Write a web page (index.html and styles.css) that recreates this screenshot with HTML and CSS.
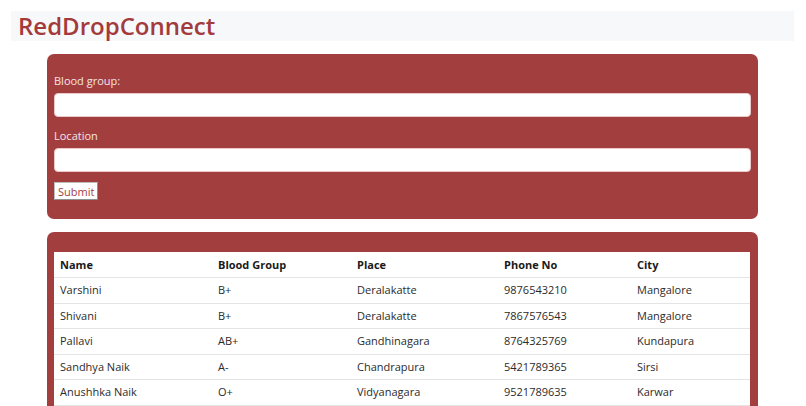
FILE: index.html
```html
<!DOCTYPE html>
<html>
<head>
<meta charset="utf-8">
<link rel="stylesheet" href="styles.css">
</head>
<body>
<header class="brand-bar">
  <h1 class="brand">RedDropConnect</h1>
</header>
<main class="content">
  <form class="card search-card">
    <label class="field-label" for="bg">Blood group:</label>
    <input class="field-input" id="bg" type="text">
    <label class="field-label" for="loc">Location</label>
    <input class="field-input" id="loc" type="text">
    <button class="submit-btn" type="button">Submit</button>
  </form>
  <section class="card table-card">
    <table class="donors">
      <thead>
        <tr><th class="c1">Name</th><th class="c2">Blood Group</th><th class="c3">Place</th><th class="c4">Phone No</th><th class="c5">City</th></tr>
      </thead>
      <tbody>
        <tr><td>Varshini</td><td>B+</td><td>Deralakatte</td><td>9876543210</td><td>Mangalore</td></tr>
        <tr><td>Shivani</td><td>B+</td><td>Deralakatte</td><td>7867576543</td><td>Mangalore</td></tr>
        <tr><td>Pallavi</td><td>AB+</td><td>Gandhinagara</td><td>8764325769</td><td>Kundapura</td></tr>
        <tr><td>Sandhya Naik</td><td>A-</td><td>Chandrapura</td><td>5421789365</td><td>Sirsi</td></tr>
        <tr><td>Anushhka Naik</td><td>O+</td><td>Vidyanagara</td><td>9521789635</td><td>Karwar</td></tr>
      </tbody>
    </table>
  </section>
</main>
</body>
</html>
```
FILE: styles.css
```css
* { box-sizing: border-box; }
body {
  margin: 0;
  font-family: "Open Sans", "Noto Sans", sans-serif;
  background: #fff;
  color: #212529;
  overflow: hidden;
}
.brand-bar {
  margin: 11px 12px 0 11px;
  height: 30px;
  background: #f7f8fa;
  display: flex;
  align-items: center;
  padding-left: 7px;
}
.brand {
  margin: 0;
  font-size: 24px;
  font-weight: 600;
  color: #a33b3c;
  letter-spacing: 0;
  line-height: 30px;
}
.content {
  margin: 13px 48px 0 47px;
  display: flex;
  flex-direction: column;
  gap: 13px;
}
.card {
  background: #a33e3f;
  border-radius: 7px;
}
.search-card {
  display: flex;
  flex-direction: column;
  align-items: flex-start;
  padding: 19px 7px 19px 7px;
}
.field-label {
  color: #f4e4e4;
  font-size: 11px;
  line-height: 16px;
  margin-bottom: 4px;
}
.field-input {
  width: 100%;
  height: 24px;
  border: 1px solid #e9c9c9;
  border-radius: 4px;
  background: #fff;
  margin-bottom: 11px;
}
.submit-btn {
  margin-top: -1px;
  font-family: inherit;
  font-size: 11px;
  color: #a33e3f;
  background: #fff;
  border: 1px solid #bdbdbd;
  border-right-color: #8f8f8f;
  border-bottom-color: #8f8f8f;
  padding: 0 3px;
  height: 18px;
  line-height: 15px;
  cursor: pointer;
}
.table-card {
  padding: 20px 8px 0 7px;
  height: 200px;
}
.donors {
  width: 100%;
  border-collapse: collapse;
  background: #fff;
  font-size: 11px;
  table-layout: fixed;
}
.donors th, .donors td {
  text-align: left;
  padding: 4px 6px;
  height: 25.5px;
  line-height: 16px;
  border-bottom: 1px solid #e4e4e4;
}
.donors th { font-weight: 700; color: #1a1a1a; }
.donors td { color: #2b2b2b; }
.c1 { width: 158px; }
.c2 { width: 139px; }
.c3 { width: 147px; }
.c4 { width: 133px; }
```
